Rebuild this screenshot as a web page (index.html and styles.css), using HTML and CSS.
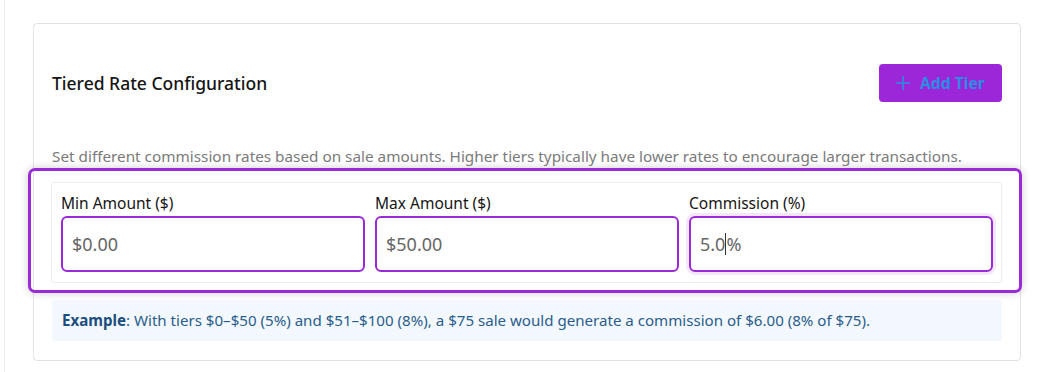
FILE: index.html
```html
<!DOCTYPE html>
<html>
<head>
    <title>Tiered Rate Configuration</title>
    <link rel="stylesheet" href="styles.css">
</head>
<body>
    <div class="page">
        <div class="card">
            <div class="card-header">
                <h3 class="title">Tiered Rate Configuration</h3>
                <button class="add-tier">
                    <svg width="16" height="16" viewBox="0 0 16 16"><path d="M8 1v14M1 8h14" stroke="currentColor" stroke-width="1.6" fill="none"/></svg>
                    Add Tier
                </button>
            </div>
            <p class="description">Set different commission rates based on sale amounts. Higher tiers typically have lower rates to encourage larger transactions.</p>

            <div class="highlight">
                <div class="tier">
                    <div class="field">
                        <label>Min Amount ($)</label>
                        <input type="text" value="$0.00">
                    </div>
                    <div class="field">
                        <label>Max Amount ($)</label>
                        <input type="text" value="$50.00">
                    </div>
                    <div class="field">
                        <label>Commission (%)</label>
                        <div class="input focused">5.0<span class="caret"></span>%</div>
                    </div>
                </div>
            </div>

            <div class="example">
                <strong>Example</strong>: With tiers $0–$50 (5%) and $51–$100 (8%), a $75 sale would generate a commission of $6.00 (8% of $75).
            </div>
        </div>
    </div>
</body>
</html>
```

FILE: styles.css
```css
body {
    margin: 0;
    background-color: #fff;
    font-family: "Noto Sans", sans-serif;
    color: #111;
}

.page {
    margin-left: 4px;
    border-left: 1px solid #ececec;
    padding: 23px 27px 13px 28px;
    min-height: 336px;
}

.card {
    border: 1px solid #e2e2e2;
    border-radius: 4px;
    padding: 40px 18px 19px 18px;
}

.card-header {
    display: flex;
    justify-content: space-between;
    align-items: center;
    height: 38px;
}

.title {
    margin: 0;
    font-size: 17.5px;
    font-weight: 500;
    color: #151515;
}

.add-tier {
    display: flex;
    align-items: center;
    gap: 9px;
    height: 38px;
    width: 123px;
    padding: 0 16px;
    background-color: #9c27d9;
    border: none;
    border-radius: 4px;
    color: #2a8de2;
    font-family: inherit;
    font-size: 15.7px;
    font-weight: 700;
    white-space: nowrap;
    cursor: pointer;
}

.description {
    margin: 44px 0 2px 0;
    font-size: 15.3px;
    line-height: 20px;
    color: #7a7a7a;
}

.highlight {
    margin: 0 -20px 0 -24px;
    padding: 11px 17px 7px 20px;
    border: 3px solid #9a2ad8;
    border-radius: 7px;
    box-shadow: 0 0 8px rgba(0, 0, 0, 0.2);
}

.tier {
    display: grid;
    grid-template-columns: repeat(3, 1fr);
    gap: 10px;
    padding: 10px 8px 10px 9px;
    border: 1px solid #ececec;
    border-radius: 3px;
}

.field label {
    display: block;
    font-size: 15.5px;
    line-height: 20px;
    margin-bottom: 3px;
    color: #151515;
}

.field input,
.field .input {
    box-sizing: border-box;
    display: flex;
    align-items: center;
    width: 100%;
    height: 56px;
    padding: 0 9px;
    border: 2px solid #9a2ad8;
    border-radius: 6px;
    font-family: inherit;
    font-size: 18px;
    color: #666;
    outline: none;
}

.field .focused {
    box-shadow: 0 0 0 3px #f4e6fc;
}

.caret {
    display: inline-block;
    width: 1px;
    height: 22px;
    background-color: #333;
}

.example {
    margin-top: 7px;
    padding: 10px;
    background-color: #f2f8fd;
    border-radius: 3px;
    font-size: 15.1px;
    line-height: 21px;
    color: #2b5d8c;
}

.example strong {
    color: #1d4e7e;
}
```
